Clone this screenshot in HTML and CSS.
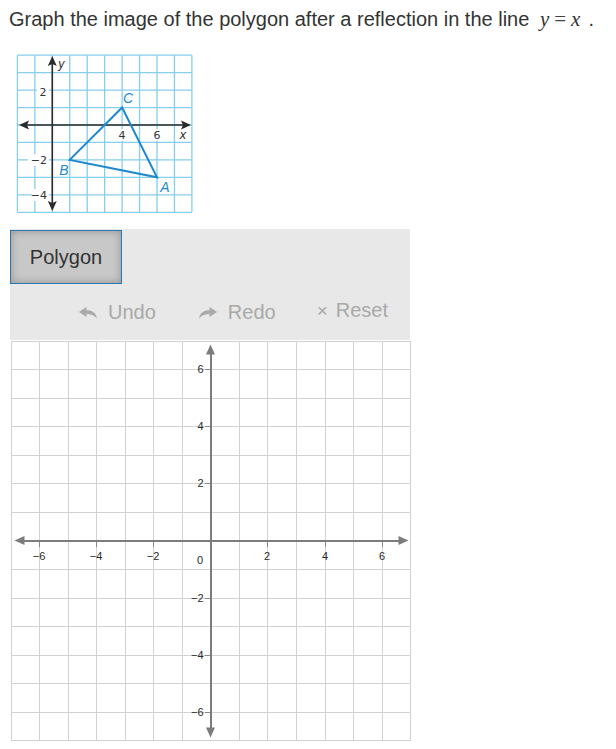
FILE: index.html
```html
<!DOCTYPE html>
<html>
<head>
<meta charset="utf-8">
<link rel="stylesheet" href="styles.css">
</head>
<body>
<div class="page">
  <p class="prompt">Graph the image of the polygon after a reflection in the line <span class="math"><i>y</i><span class="eq">=</span><i>x</i></span><span class="dot">.</span></p>

  <div class="figure">
    <svg class="fig-svg" width="200" height="170" viewBox="10 50 200 170" xmlns="http://www.w3.org/2000/svg">
      <rect x="17.4" y="55.2" width="174.5" height="157" fill="#ffffff"/>
      <g stroke="#86cdee" stroke-width="1.3" fill="none">
        <line x1="17.4" y1="55.2" x2="17.4" y2="212.3"/>
        <line x1="34.85" y1="55.2" x2="34.85" y2="212.3"/>
        <line x1="52.3" y1="55.2" x2="52.3" y2="212.3"/>
        <line x1="69.75" y1="55.2" x2="69.75" y2="212.3"/>
        <line x1="87.2" y1="55.2" x2="87.2" y2="212.3"/>
        <line x1="104.65" y1="55.2" x2="104.65" y2="212.3"/>
        <line x1="122.1" y1="55.2" x2="122.1" y2="212.3"/>
        <line x1="139.55" y1="55.2" x2="139.55" y2="212.3"/>
        <line x1="157" y1="55.2" x2="157" y2="212.3"/>
        <line x1="174.45" y1="55.2" x2="174.45" y2="212.3"/>
        <line x1="191.9" y1="55.2" x2="191.9" y2="212.3"/>
        <line x1="17.4" y1="55.2" x2="191.9" y2="55.2"/>
        <line x1="17.4" y1="72.65" x2="191.9" y2="72.65"/>
        <line x1="17.4" y1="90.1" x2="191.9" y2="90.1"/>
        <line x1="17.4" y1="107.55" x2="191.9" y2="107.55"/>
        <line x1="17.4" y1="125" x2="191.9" y2="125"/>
        <line x1="17.4" y1="142.45" x2="191.9" y2="142.45"/>
        <line x1="17.4" y1="159.9" x2="191.9" y2="159.9"/>
        <line x1="17.4" y1="177.35" x2="191.9" y2="177.35"/>
        <line x1="17.4" y1="194.8" x2="191.9" y2="194.8"/>
        <line x1="17.4" y1="212.3" x2="191.9" y2="212.3"/>
      </g>
      <g fill="#ffffff">
        <rect x="37" y="85" width="12" height="13"/>
        <rect x="28" y="154" width="21" height="12"/>
        <rect x="32" y="189" width="17" height="12"/>
        <rect x="117" y="129" width="10" height="12"/>
        <rect x="152" y="129" width="10" height="12"/>
        <rect x="178" y="130" width="10" height="11"/>
        <rect x="57" y="58" width="9" height="12"/>
      </g>
      <g stroke="#2b2b2b" stroke-width="1.6" fill="none">
        <line x1="26" y1="125" x2="184" y2="125"/>
        <line x1="52.3" y1="63" x2="52.3" y2="204"/>
      </g>
      <g fill="#2b2b2b">
        <polygon points="19,125 29,120.5 27,125 29,129.5"/>
        <polygon points="191,125 181,120.5 183,125 181,129.5"/>
        <polygon points="52.3,56 47.8,66 52.3,64 56.8,66"/>
        <polygon points="52.3,211 47.8,201 52.3,203 56.8,201"/>
      </g>
      <polygon points="122.1,107.55 69.75,159.9 157,177.35" fill="none" stroke="#1f88cf" stroke-width="2" stroke-linejoin="miter"/>
      <g class="fig-num">
        <text x="43" y="95.5" text-anchor="middle">2</text>
        <text x="122" y="139" text-anchor="middle">4</text>
        <text x="157" y="139" text-anchor="middle">6</text>
        <text x="47" y="164" text-anchor="end">−2</text>
        <text x="47" y="199" text-anchor="end">−4</text>
      </g>
      <g class="fig-var">
        <text x="61.5" y="68" text-anchor="middle">y</text>
        <text x="183" y="139" text-anchor="middle">x</text>
      </g>
      <g class="fig-pt">
        <text x="128" y="103" text-anchor="middle">C</text>
        <text x="64" y="175" text-anchor="middle">B</text>
        <text x="165" y="192" text-anchor="middle">A</text>
      </g>
    </svg>
  </div>

  <div class="tool-panel">
    <div class="tool-row">
      <button class="poly-btn" type="button">Polygon</button>
    </div>
    <div class="action-row">
      <span class="action">
        <svg class="act-icon" width="18" height="12" viewBox="0 0 18 12" xmlns="http://www.w3.org/2000/svg"><path d="M0 5 L7.5 0 L7.5 3.2 C13 3.2 17 5.5 18 11.5 C15.5 8.2 11.5 7 7.5 7 L7.5 10 Z" fill="#a9a9a9"/></svg>
        <span>Undo</span>
      </span>
      <span class="action">
        <svg class="act-icon" width="18" height="12" viewBox="0 0 18 12" xmlns="http://www.w3.org/2000/svg"><path d="M18 5 L10.5 0 L10.5 3.2 C5 3.2 1 5.5 0 11.5 C2.5 8.2 6.5 7 10.5 7 L10.5 10 Z" fill="#a9a9a9"/></svg>
        <span>Redo</span>
      </span>
      <span class="action action-reset">
        <span class="times">×</span>
        <span>Reset</span>
      </span>
    </div>
  </div>

  <div class="board">
    <svg class="board-svg" width="401" height="401" viewBox="9.5 339.5 401 401" xmlns="http://www.w3.org/2000/svg">
      <rect x="10" y="340" width="400" height="400" fill="#ffffff"/>
      <g stroke="#d2d2d2" stroke-width="1" shape-rendering="crispEdges">
        <line x1="10.5" y1="340" x2="10.5" y2="740"/>
        <line x1="38.5" y1="340" x2="38.5" y2="740"/>
        <line x1="67.5" y1="340" x2="67.5" y2="740"/>
        <line x1="95.5" y1="340" x2="95.5" y2="740"/>
        <line x1="124.5" y1="340" x2="124.5" y2="740"/>
        <line x1="152.5" y1="340" x2="152.5" y2="740"/>
        <line x1="181.5" y1="340" x2="181.5" y2="740"/>
        <line x1="238.5" y1="340" x2="238.5" y2="740"/>
        <line x1="266.5" y1="340" x2="266.5" y2="740"/>
        <line x1="295.5" y1="340" x2="295.5" y2="740"/>
        <line x1="324.5" y1="340" x2="324.5" y2="740"/>
        <line x1="352.5" y1="340" x2="352.5" y2="740"/>
        <line x1="381.5" y1="340" x2="381.5" y2="740"/>
        <line x1="409.5" y1="340" x2="409.5" y2="740"/>
        <line x1="10" y1="340.5" x2="410" y2="340.5"/>
        <line x1="10" y1="368.5" x2="410" y2="368.5"/>
        <line x1="10" y1="397.5" x2="410" y2="397.5"/>
        <line x1="10" y1="425.5" x2="410" y2="425.5"/>
        <line x1="10" y1="454.5" x2="410" y2="454.5"/>
        <line x1="10" y1="482.5" x2="410" y2="482.5"/>
        <line x1="10" y1="511.5" x2="410" y2="511.5"/>
        <line x1="10" y1="568.5" x2="410" y2="568.5"/>
        <line x1="10" y1="597.5" x2="410" y2="597.5"/>
        <line x1="10" y1="625.5" x2="410" y2="625.5"/>
        <line x1="10" y1="654.5" x2="410" y2="654.5"/>
        <line x1="10" y1="682.5" x2="410" y2="682.5"/>
        <line x1="10" y1="711.5" x2="410" y2="711.5"/>
        <line x1="10" y1="739.5" x2="410" y2="739.5"/>
      </g>
      <g stroke="#8a8a8a" stroke-width="1" shape-rendering="crispEdges">
        <line x1="38.5" y1="540" x2="38.5" y2="546"/>
        <line x1="95.5" y1="540" x2="95.5" y2="546"/>
        <line x1="152.5" y1="540" x2="152.5" y2="546"/>
        <line x1="266.5" y1="540" x2="266.5" y2="546"/>
        <line x1="324.5" y1="540" x2="324.5" y2="546"/>
        <line x1="381.5" y1="540" x2="381.5" y2="546"/>
        <line x1="204" y1="368.5" x2="210" y2="368.5"/>
        <line x1="204" y1="425.5" x2="210" y2="425.5"/>
        <line x1="204" y1="482.5" x2="210" y2="482.5"/>
        <line x1="204" y1="597.5" x2="210" y2="597.5"/>
        <line x1="204" y1="654.5" x2="210" y2="654.5"/>
        <line x1="204" y1="711.5" x2="210" y2="711.5"/>
      </g>
      <g stroke="#7c7c7c" stroke-width="2" shape-rendering="crispEdges">
        <line x1="20" y1="540" x2="402" y2="540"/>
        <line x1="210" y1="350" x2="210" y2="731"/>
      </g>
      <g fill="#7c7c7c">
        <polygon points="14,540 24,535.5 24,544.5"/>
        <polygon points="408,540 398,535.5 398,544.5"/>
        <polygon points="210,344 205.5,354 214.5,354"/>
        <polygon points="210,737 205.5,727 214.5,727"/>
      </g>
      <g class="axis-num" text-anchor="middle">
        <text x="38.5" y="559">−6</text>
        <text x="95.5" y="559">−4</text>
        <text x="152.5" y="559">−2</text>
        <text x="266.5" y="559">2</text>
        <text x="324.5" y="559">4</text>
        <text x="381.5" y="559">6</text>
      </g>
      <g class="axis-num" text-anchor="end">
        <text x="202.5" y="563">0</text>
        <text x="203" y="372.5">6</text>
        <text x="203" y="429.5">4</text>
        <text x="203" y="486.5">2</text>
        <text x="203" y="601.5">−2</text>
        <text x="203" y="658.5">−4</text>
        <text x="203" y="715.5">−6</text>
      </g>
    </svg>
  </div>
</div>
</body>
</html>
```

FILE: styles.css
```css
html, body {
  margin: 0;
  padding: 0;
  background: #ffffff;
}

body {
  font-family: "Liberation Sans", Arial, sans-serif;
  color: #333333;
}

.page {
  width: 616px;
  padding-top: 8px;
}

.prompt {
  margin: 0 0 0 9px;
  font-size: 20px;
  line-height: 22px;
  height: 22px;
  color: #333333;
  white-space: nowrap;
}

.math {
  font-family: "Liberation Serif", "Times New Roman", serif;
  font-size: 21px;
  margin-left: 5px;
}

.math i {
  font-style: italic;
}

.eq {
  font-style: normal;
  margin: 0 5px;
  color: #444444;
}

.dot {
  margin-left: 8px;
}

.figure {
  margin-top: 20px;
  height: 170px;
}

.fig-svg {
  display: block;
  margin-left: 10px;
}

.fig-num {
  font-family: "DejaVu Sans", "Liberation Sans", sans-serif;
  font-size: 11px;
  fill: #333333;
}

.fig-var {
  font-family: "DejaVu Sans", "Liberation Sans", sans-serif;
  font-style: italic;
  font-size: 11.5px;
  fill: #333333;
}

.fig-pt {
  font-family: "Liberation Sans", Arial, sans-serif;
  font-style: italic;
  font-size: 14px;
  fill: #1f88cf;
}

.tool-panel {
  margin: 9px 0 0 10px;
  width: 400px;
  background: #e8e8e8;
}

.tool-row {
  display: flex;
  padding-top: 1px;
}

.poly-btn {
  width: 112px;
  height: 54px;
  margin: 0;
  padding: 0;
  border: 1px solid #2a77b4;
  background: #c8c8c8;
  box-shadow: inset 0 0 8px rgba(0, 0, 0, 0.28);
  font-family: "Liberation Sans", Arial, sans-serif;
  font-size: 20px;
  color: #333333;
  text-align: center;
}

.action-row {
  height: 56px;
  display: flex;
  align-items: center;
  justify-content: flex-end;
  gap: 43px;
  padding-right: 22px;
  font-size: 20px;
  color: #a9a9a9;
}

.action {
  display: flex;
  align-items: center;
  gap: 11px;
  margin-top: 1px;
}

.action-reset {
  gap: 8px;
  margin-top: -3px;
  margin-left: -2px;
}

.act-icon {
  display: block;
}

.times {
  font-size: 19px;
  line-height: 20px;
}

.board {
  margin-left: 9px;
  width: 402px;
}

.board-svg {
  display: block;
  margin-left: 0.5px;
}

.axis-num {
  font-family: "Liberation Sans", Arial, sans-serif;
  font-size: 11px;
  fill: #2a2a2a;
}
```
